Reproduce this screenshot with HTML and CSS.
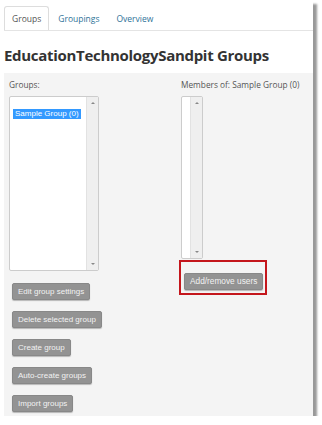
FILE: index.html
```html
<!DOCTYPE html>
<html lang="en">
<head>
  <meta charset="UTF-8">
  <meta name="viewport" content="width=device-width, initial-scale=1.0">
  <title>EducationTechnologySandpit Groups</title>
  <link rel="stylesheet" href="styles.css">
</head>
<body>
  <div class="frame">
    <ul class="tabs">
      <li class="tab active">Groups</li>
      <li class="tab">Groupings</li>
      <li class="tab">Overview</li>
    </ul>

    <h1>EducationTechnologySandpit Groups</h1>

    <div class="panel">
      <div class="col col-groups">
        <p class="label">Groups:</p>
        <div class="listbox groups-box">
          <div class="options">
            <span class="option selected">Sample Group (0)</span>
          </div>
          <div class="scroll"><span class="arrow up"></span><span class="arrow down"></span></div>
        </div>
        <button class="btn first">Edit group settings</button>
        <button class="btn">Delete selected group</button>
        <button class="btn">Create group</button>
        <button class="btn">Auto-create groups</button>
        <button class="btn">Import groups</button>
      </div>

      <div class="col col-members">
        <p class="label">Members of: Sample Group (0)</p>
        <div class="listbox members-box">
          <div class="options"></div>
          <div class="scroll"><span class="arrow up"></span><span class="arrow down"></span></div>
        </div>
        <div class="highlight">
          <button class="btn">Add/remove users</button>
        </div>
      </div>
    </div>
  </div>
</body>
</html>
```

FILE: styles.css
```css
body {
  margin: 0;
  background: #fff;
  font-family: "Open Sans", "Liberation Sans", sans-serif;
}
.frame {
  width: 309px;
  height: 416px;
  padding-left: 4px;
  display: flex;
  flex-direction: column;
  background: #fff;
  box-shadow: 4px 4px 2px rgba(0, 0, 0, 0.4);
}
.tabs {
  list-style: none;
  margin: 0;
  padding: 6px 0 0 0;
  display: flex;
  border-bottom: 1px solid #e4e4e4;
}
.tab {
  height: 23px;
  line-height: 23px;
  padding: 0 7px;
  margin-right: 1px;
  font-size: 8.5px;
  color: #2f7399;
  border: 1px solid transparent;
  border-bottom: none;
  border-radius: 3px 3px 0 0;
}
.tab.active {
  color: #555;
  background: #fff;
  border-color: #ddd;
  margin-bottom: -1px;
}
h1 {
  margin: 12px 0 6px 0;
  font-size: 15px;
  line-height: 24px;
  letter-spacing: -0.3px;
  font-weight: 700;
  color: #333;
  white-space: nowrap;
}
.panel {
  flex: 1;
  background: #f4f4f4;
  padding: 6px 0 0 5px;
  display: flex;
}
.col {
  display: flex;
  flex-direction: column;
  align-items: flex-start;
}
.col-groups {
  width: 172px;
}
.label {
  margin: 0 0 5px 0;
  font-size: 8.3px;
  line-height: 12px;
  color: #555;
  white-space: nowrap;
}
.listbox {
  display: flex;
  background: #fff;
  border: 1px solid #ccc;
  border-radius: 2px;
  box-sizing: border-box;
}
.groups-box {
  width: 90px;
  height: 175px;
}
.members-box {
  width: 22px;
  height: 163px;
}
.options {
  flex: 1;
  padding: 2px 3px;
}
.option {
  display: inline-block;
  font-family: "Liberation Sans", Arial, sans-serif;
  font-size: 8px;
  line-height: 10px;
  padding: 0 2px;
}
.option.selected {
  background: #3399ff;
  color: #fff;
}
.scroll {
  width: 11px;
  background: #efefef;
  border-left: 1px solid #e2e2e2;
  display: flex;
  flex-direction: column;
  justify-content: space-between;
  align-items: center;
  padding: 5px 0;
}
.arrow {
  width: 0;
  height: 0;
  border-left: 2px solid transparent;
  border-right: 2px solid transparent;
}
.arrow.up {
  border-bottom: 2px solid #888;
}
.arrow.down {
  border-top: 2px solid #888;
}
.btn {
  height: 17px;
  margin: 11px 0 0 3px;
  padding: 0 5px;
  font-family: "Liberation Sans", Arial, sans-serif;
  font-size: 8px;
  color: #f2f2f2;
  background: #939393;
  border: 1px solid #888;
  border-radius: 2px;
  box-shadow: 0 1px 1px rgba(0, 0, 0, 0.25);
}
.btn.first {
  margin-top: 12px;
}
.highlight {
  margin: 1px 0 0 -2px;
  padding: 5px 2px 3px 3px;
  border: 2px solid #c4161c;
}
.highlight .btn {
  margin: 0;
  height: 17px;
  font-size: 8.3px;
}
```
